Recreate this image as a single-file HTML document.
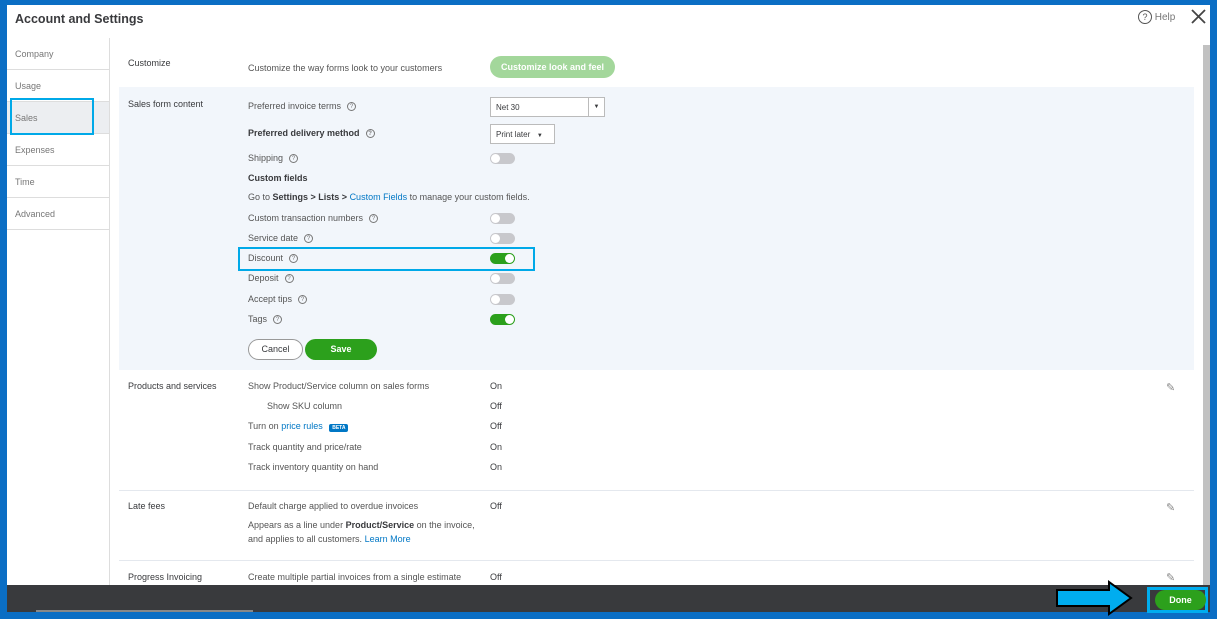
<!DOCTYPE html>
<html><head><style>
*{margin:0;padding:0;box-sizing:border-box}
body{width:1217px;height:619px;background:#0b6ec4;font-family:"Liberation Sans",sans-serif;position:relative;overflow:hidden;color:#393a3d}
.in{position:absolute;left:7px;top:5px;width:1203px;height:607px;background:#fff;overflow:hidden}
.a{position:absolute;font-size:9px;white-space:nowrap;color:#555}
.b{font-weight:bold;color:#393a3d}
.lnk{color:#0077c5}
.q{display:inline-block;width:9px;height:9px;border:1px solid #777;border-radius:50%;font-size:6px;text-align:center;line-height:8px;margin-left:6px;vertical-align:middle;color:#777}
.tg{position:absolute;width:25px;height:11px;border-radius:6px;background:#c8c8cc}
.tg:after{content:"";position:absolute;left:1px;top:1px;width:9px;height:9px;border-radius:50%;background:#fff}
.tg.on{background:#2ca01c}.tg.on:after{left:15px}
.nav{position:absolute;left:0;width:102px;height:32px;border-bottom:1px solid #ddd;font-size:9px;color:#777;padding:11px 0 0 8px}
.hr{position:absolute;height:1px;background:#e4e8ee}
.pen{position:absolute;font-size:11px;color:#888}
</style></head><body>
<div class="in">
<div class="a b" style="left:8px;top:7px;font-size:12.5px">Account and Settings</div>
<div class="a" style="left:1131px;top:5px;font-size:10px;color:#777"><span style="display:inline-block;width:14px;height:14px;border:1.5px solid #555;border-radius:50%;text-align:center;font-size:9px;line-height:12px;color:#555">?</span> Help</div>
<svg style="position:absolute;left:1184px;top:4px" width="15" height="15"><path d="M1 1L14 14M14 1L1 14" stroke="#444" stroke-width="1.8"/></svg>
<div style="position:absolute;left:102px;top:33px;width:1px;height:550px;background:#ddd"></div>
<div class="nav" style="top:33px">Company</div>
<div class="nav" style="top:65px">Usage</div>
<div class="nav" style="top:97px;background:#eceef1">Sales</div>
<div style="position:absolute;left:3px;top:93px;width:84px;height:37px;border:2px solid #00a9e8"></div>
<div class="nav" style="top:129px">Expenses</div>
<div class="nav" style="top:161px">Time</div>
<div class="nav" style="top:193px">Advanced</div>
<div style="position:absolute;left:112px;top:82px;width:1075px;height:283px;background:#f2f6fb"></div>
<div class="a" style="left:121px;top:53px;color:#393a3d">Customize</div>
<div class="a" style="left:241px;top:58px">Customize the way forms look to your customers</div>
<div style="position:absolute;left:483px;top:51px;width:125px;height:22px;border-radius:11px;background:#a3d79b;color:#fff;font-size:9px;font-weight:bold;text-align:center;line-height:22px">Customize look and feel</div>
<div class="a" style="left:121px;top:94px;color:#393a3d">Sales form content</div>
<div class="a" style="left:241px;top:96px">Preferred invoice terms<span class="q">?</span></div>
<div style="position:absolute;left:483px;top:92px;width:115px;height:20px;border:1px solid #bbb;background:#fff;font-size:8px;padding:5px 5px"> Net 30<span style="position:absolute;right:0;top:0;width:16px;height:18px;border-left:1px solid #bbb;text-align:center;line-height:18px;font-size:6px">▼</span></div>
<div class="a b" style="left:241px;top:123px">Preferred delivery method<span class="q">?</span></div>
<div style="position:absolute;left:483px;top:119px;width:65px;height:20px;border:1px solid #bbb;background:#fff;font-size:8px;padding:5px 5px">Print later &nbsp; <span style="font-size:6px">▼</span></div>
<div class="a" style="left:241px;top:148px">Shipping<span class="q">?</span></div><div class="tg" style="left:483px;top:148px"></div>
<div class="a b" style="left:241px;top:168px">Custom fields</div>
<div class="a" style="left:241px;top:187px">Go to <b style="color:#393a3d">Settings &gt; Lists &gt;</b> <span class="lnk">Custom Fields</span> to manage your custom fields.</div>
<div class="a" style="left:241px;top:208px">Custom transaction numbers<span class="q">?</span></div><div class="tg" style="left:483px;top:208px"></div>
<div class="a" style="left:241px;top:228px">Service date<span class="q">?</span></div><div class="tg" style="left:483px;top:228px"></div>
<div style="position:absolute;left:231px;top:242px;width:297px;height:24px;border:2px solid #00a9e8"></div>
<div class="a" style="left:241px;top:248px">Discount<span class="q">?</span></div><div class="tg on" style="left:483px;top:248px"></div>
<div class="a" style="left:241px;top:268px">Deposit<span class="q">?</span></div><div class="tg" style="left:483px;top:268px"></div>
<div class="a" style="left:241px;top:289px">Accept tips<span class="q">?</span></div><div class="tg" style="left:483px;top:289px"></div>
<div class="a" style="left:241px;top:309px">Tags<span class="q">?</span></div><div class="tg on" style="left:483px;top:309px"></div>
<div style="position:absolute;left:241px;top:334px;width:55px;height:21px;border:1px solid #999;border-radius:11px;background:#fff;font-size:9px;text-align:center;line-height:19px;color:#393a3d">Cancel</div>
<div style="position:absolute;left:298px;top:334px;width:72px;height:21px;border-radius:11px;background:#2ca01c;color:#fff;font-weight:bold;font-size:9px;text-align:center;line-height:21px">Save</div>
<div class="a" style="left:121px;top:376px;color:#393a3d">Products and services</div>
<div class="a" style="left:241px;top:376px">Show Product/Service column on sales forms</div><div class="a b" style="left:483px;top:376px;font-weight:normal">On</div>
<div class="a" style="left:260px;top:396px">Show SKU column</div><div class="a" style="left:483px;top:396px;color:#393a3d">Off</div>
<div class="a" style="left:241px;top:416px">Turn on <span class="lnk">price rules</span> <span style="background:#0077c5;color:#fff;font-size:5px;font-weight:bold;padding:1px 3px;border-radius:2px;margin-left:4px">BETA</span></div><div class="a" style="left:483px;top:416px;color:#393a3d">Off</div>
<div class="a" style="left:241px;top:437px">Track quantity and price/rate</div><div class="a" style="left:483px;top:437px;color:#393a3d">On</div>
<div class="a" style="left:241px;top:457px">Track inventory quantity on hand</div><div class="a" style="left:483px;top:457px;color:#393a3d">On</div>
<div class="pen" style="left:1159px;top:376px">✎</div>
<div class="hr" style="left:112px;top:485px;width:1075px"></div>
<div class="a" style="left:121px;top:496px;color:#393a3d">Late fees</div>
<div class="a" style="left:241px;top:496px">Default charge applied to overdue invoices</div><div class="a" style="left:483px;top:496px;color:#393a3d">Off</div>
<div class="a" style="left:241px;top:515px">Appears as a line under <b style="color:#393a3d">Product/Service</b> on the invoice,</div>
<div class="a" style="left:241px;top:529px">and applies to all customers. <span class="lnk">Learn More</span></div>
<div class="pen" style="left:1159px;top:496px">✎</div>
<div class="hr" style="left:112px;top:555px;width:1075px"></div>
<div class="a" style="left:121px;top:567px;color:#393a3d">Progress Invoicing</div>
<div class="a" style="left:241px;top:567px">Create multiple partial invoices from a single estimate</div><div class="a" style="left:483px;top:567px;color:#393a3d">Off</div>
<div class="pen" style="left:1159px;top:566px">✎</div>
<div style="position:absolute;left:1196px;top:40px;width:7px;height:540px;background:#c1c1c1"></div>
<div style="position:absolute;left:0;top:580px;width:1203px;height:27px;background:#393a3d"></div>
<div style="position:absolute;left:29px;top:605px;width:217px;height:2px;background:#888"></div>
</div>
<svg style="position:absolute;left:1055px;top:580px" width="78" height="36"><path d="M2 10H54V2L76 18L54 34V26H2Z" fill="#00adef" stroke="#000" stroke-width="2"/></svg>
<div style="position:absolute;left:1147px;top:587px;width:61px;height:26px;border:3px solid #00adef;background:#393a3d"></div>
<div style="position:absolute;left:1155px;top:590px;width:51px;height:20px;border-radius:10px;background:#2ca01c;color:#fff;font-size:9px;font-weight:bold;text-align:center;line-height:20px">Done</div>
</body></html>
